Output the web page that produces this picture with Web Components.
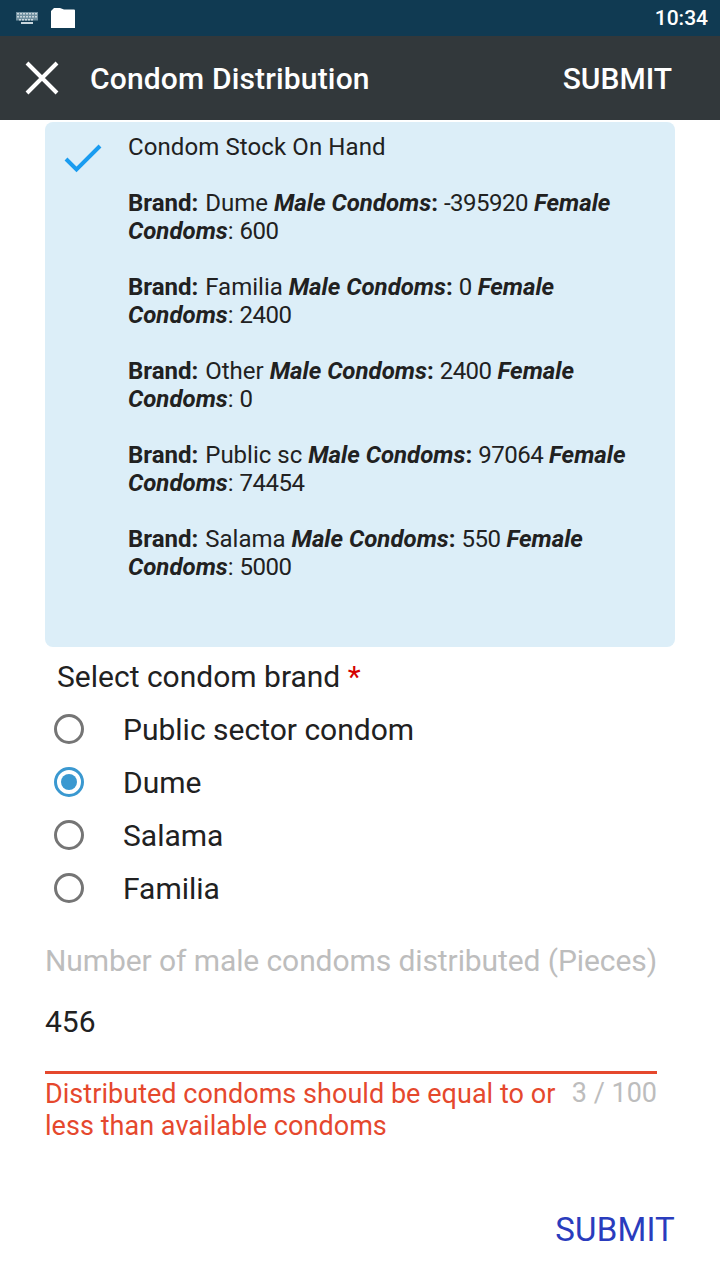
<!DOCTYPE html>
<html lang="en">

<head>
    <meta charset="UTF-8">
    <title>Condom Distribution</title>
    <style>
        html, body { margin: 0; padding: 0; background: #fff; }
        body { width: 720px; height: 1280px; overflow: hidden; font-family: Roboto, sans-serif; }
    </style>
</head>

<body>
    <status-bar></status-bar>
    <app-bar></app-bar>
    <stock-card>
        <span slot="title">Condom Stock On Hand</span>
        <stock-row brand="Dume" male="-395920" female="600"></stock-row>
        <stock-row brand="Familia" male="0" female="2400"></stock-row>
        <stock-row brand="Other" male="2400" female="0"></stock-row>
        <stock-row brand="Public sc" male="97064" female="74454"></stock-row>
        <stock-row brand="Salama" male="550" female="5000"></stock-row>
    </stock-card>
    <radio-group label="Select condom brand">
        <radio-item>Public sector condom</radio-item>
        <radio-item checked>Dume</radio-item>
        <radio-item>Salama</radio-item>
        <radio-item>Familia</radio-item>
    </radio-group>
    <number-field label="Number of male condoms distributed (Pieces)" value="456" counter="3 / 100"
        error="Distributed condoms should be equal to or less than available condoms"></number-field>
    <form-footer>SUBMIT</form-footer>
</body>

<script>
    class StatusBar extends HTMLElement {
        constructor() {
            super();
            this.attachShadow({ mode: 'open' });
            this.shadowRoot.innerHTML = `
            <style>
                :host { display: flex; align-items: center; height: 36px; background: #103a52; padding: 0 12px 0 16px; box-sizing: border-box; color: #fff; }
                .kb { width: 22px; height: 12px; margin-right: 13px; }
                .sd { width: 24px; height: 20px; }
                time { margin-left: auto; font-size: 21px; font-weight: 500; }
            </style>
            <svg class="kb" viewBox="0 0 22 12">
                <g fill="#c9d6dd">
                    <rect x="0" y="0" width="22" height="8.500" fill="#6f8f9f"/>
                    <path d="M1 1h2v1.500H1zM4 1h2v1.500H4zM7 1h2v1.500H7zM10 1h2v1.500h-2zM13 1h2v1.500h-2zM16 1h2v1.500h-2zM19 1h2v1.500h-2zM1 4h2v1.500H1zM4 4h2v1.500H4zM7 4h2v1.500H7zM10 4h2v1.500h-2zM13 4h2v1.500h-2zM16 4h2v1.500h-2zM19 4h2v1.500h-2zM3 7h2v1.500H3zM6 7h2v1.500H6zM9 7h2v1.500H9zM12 7h2v1.500h-2zM15 7h2v1.500h-2z"/>
                    <rect x="5" y="10" width="12" height="2"/>
                </g>
            </svg>
            <svg class="sd" viewBox="0 0 24 20"><path fill="#fff" d="M3 0h6l4 1.500h10a1 1 0 0 1 1 1V20H0V3z"/></svg>
            <time>10:34</time>`;
        }
    }

    class AppBar extends HTMLElement {
        constructor() {
            super();
            this.attachShadow({ mode: 'open' });
            this.shadowRoot.innerHTML = `
            <style>
                :host { display: flex; align-items: center; height: 84px; background: #32383b; color: #fff; padding: 0 48px 0 25px; box-sizing: border-box; font-size: 30px; font-weight: 500; }
                svg { width: 34px; height: 34px; margin-right: 31px; }
                .title { letter-spacing: .16px; }
                .action { margin-left: auto; }
            </style>
            <svg viewBox="0 0 34 34"><path d="M2 2 32 32M32 2 2 32" stroke="#fff" stroke-width="4" fill="none"/></svg>
            <span class="title">Condom Distribution</span>
            <span class="action">SUBMIT</span>`;
        }
    }

    class StockCard extends HTMLElement {
        constructor() {
            super();
            this.attachShadow({ mode: 'open' });
            this.shadowRoot.innerHTML = `
            <style>
                :host { display: flex; width: 630px; height: 525px; margin: 2px 0 0 45px; background: #dceef8; border-radius: 8px; box-sizing: border-box; color: #212121; font-size: 24px; line-height: 28px; }
                svg { width: 40px; height: 32px; margin: 22px 24px 0 19px; flex: none; }
                .body { padding-top: 11px; width: 500px; }
                .title { letter-spacing: .1px; }
            </style>
            <svg viewBox="0 0 40 32"><path d="M2 15 12.500 25.500 36 2" stroke="#1a9cf0" stroke-width="4" fill="none"/></svg>
            <div class="body"><div class="title"><slot name="title"></slot></div><slot></slot></div>`;
        }
    }

    class StockRow extends HTMLElement {
        constructor() {
            super();
            this.attachShadow({ mode: 'open' });
            this.shadowRoot.innerHTML = `
            <style>
                :host { display: block; margin-top: 28px; }
                b { font-weight: 700; }
                .brand { margin-left: 1px; }
                .num { letter-spacing: -.5px; }
            </style>
            <b>Brand:</b> <span class="brand">${this.getAttribute('brand')}</span> <b><i>Male Condoms</i>:</b> <span class="num">${this.getAttribute('male')}</span> <b><i>Female Condoms</i></b>: <span class="num">${this.getAttribute('female')}</span>`;
        }
    }

    class RadioGroup extends HTMLElement {
        constructor() {
            super();
            this.attachShadow({ mode: 'open' });
            this.shadowRoot.innerHTML = `
            <style>
                :host { display: block; margin: 12px 0 0 54px; color: #212121; font-size: 30px; }
                .label { margin-left: 3px; line-height: 36px; height: 36px; margin-bottom: 7px; }
                em { color: #d50000; font-style: normal; }
            </style>
            <div class="label">${this.getAttribute('label')} <em>*</em></div>
            <slot></slot>`;
        }
    }

    class RadioItem extends HTMLElement {
        constructor() {
            super();
            this.attachShadow({ mode: 'open' });
            this.shadowRoot.innerHTML = `
            <style>
                :host { display: flex; align-items: center; height: 53px; }
                .dot { width: 30px; height: 30px; border: 3px solid #757575; border-radius: 50%; box-sizing: border-box; margin-right: 39px; display: flex; align-items: center; justify-content: center; }
                .text { padding-top: 2px; }
                :host([checked]) .dot { border-color: #3a98d0; }
                :host([checked]) .dot::after { content: ""; width: 16px; height: 16px; border-radius: 50%; background: #3a98d0; }
            </style>
            <span class="dot"></span><span class="text"><slot></slot></span>`;
        }
    }

    class NumberField extends HTMLElement {
        constructor() {
            super();
            this.attachShadow({ mode: 'open' });
            this.shadowRoot.innerHTML = `
            <style>
                :host { display: block; margin: 29px 63px 0 45px; font-size: 30px; }
                .label { color: #bdbdbd; line-height: 36px; white-space: nowrap; letter-spacing: -.09px; }
                .value { color: #212121; line-height: 36px; margin-top: 25px; }
                .line { height: 3px; background: #e5482d; margin-top: 31px; }
                .help { display: flex; justify-content: space-between; margin-top: 4px; font-size: 27px; line-height: 32px; }
                .error { color: #e5482d; width: 520px; letter-spacing: .04px; }
                .count { color: #bdbdbd; white-space: nowrap; margin-top: -1px; }
            </style>
            <div class="label">${this.getAttribute('label')}</div>
            <div class="value">${this.getAttribute('value')}</div>
            <div class="line"></div>
            <div class="help">
                <div class="error">${this.getAttribute('error')}</div>
                <div class="count">${this.getAttribute('counter')}</div>
            </div>`;
        }
    }

    class FormFooter extends HTMLElement {
        constructor() {
            super();
            this.attachShadow({ mode: 'open' });
            this.shadowRoot.innerHTML = `
            <style>
                :host { display: flex; justify-content: flex-end; margin: 69px 45px 0 0; color: #2a3cbd; font-size: 33px; line-height: 38px; letter-spacing: .2px; }
            </style>
            <slot></slot>`;
        }
    }

    customElements.define('status-bar', StatusBar);
    customElements.define('app-bar', AppBar);
    customElements.define('stock-card', StockCard);
    customElements.define('stock-row', StockRow);
    customElements.define('radio-group', RadioGroup);
    customElements.define('radio-item', RadioItem);
    customElements.define('number-field', NumberField);
    customElements.define('form-footer', FormFooter);
</script>

</html>
